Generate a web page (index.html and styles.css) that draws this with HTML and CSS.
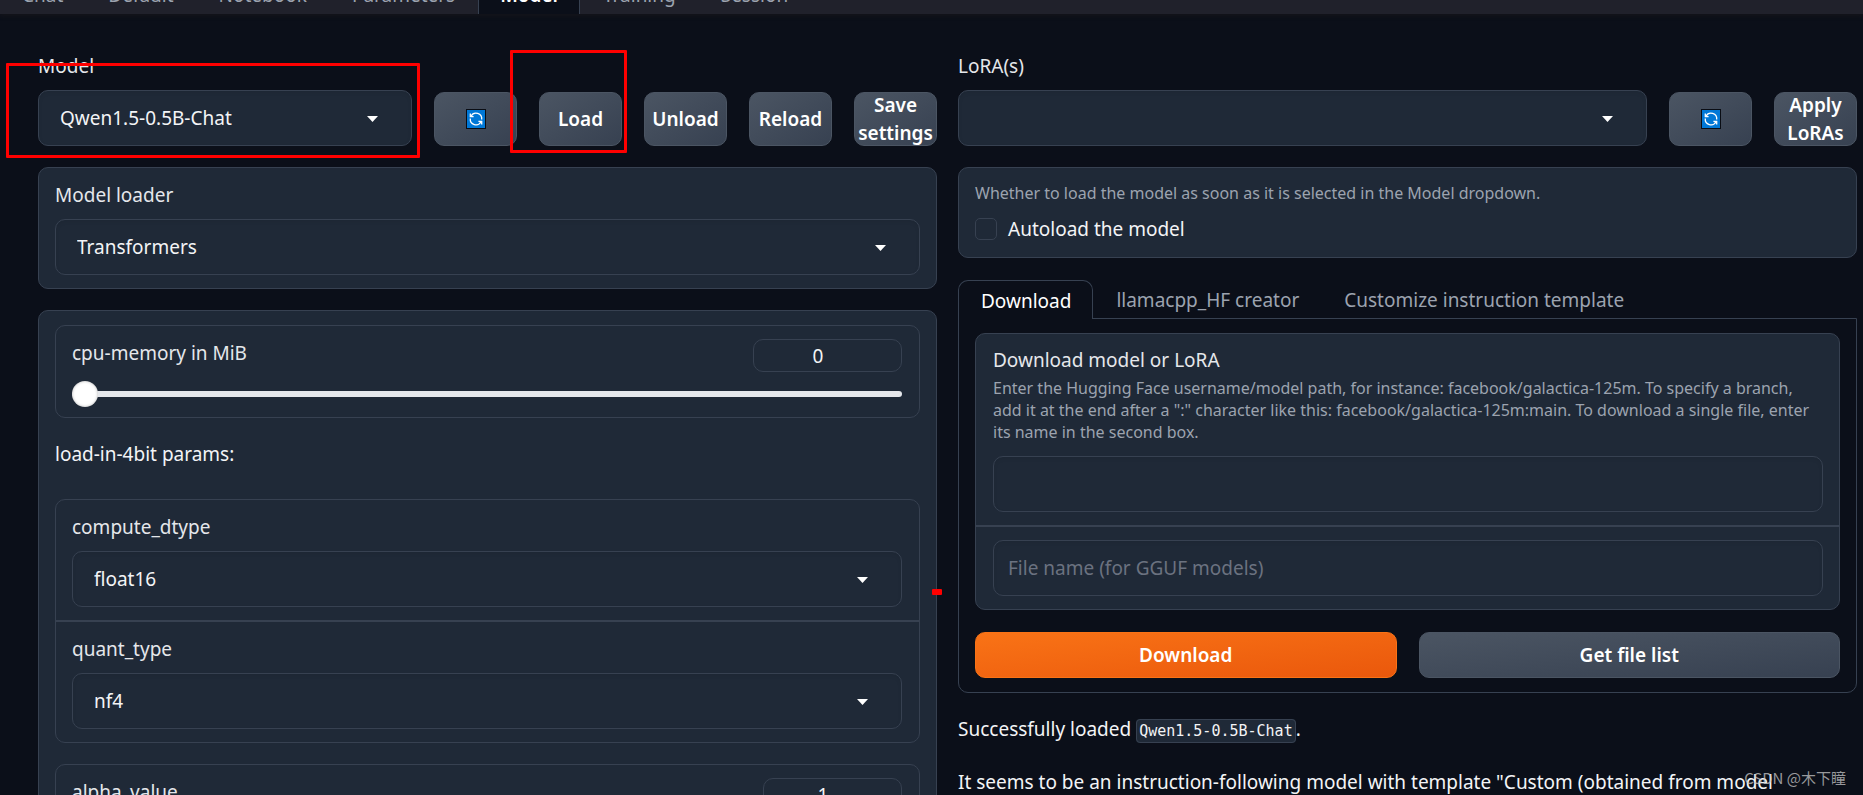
FILE: index.html
```html
<!DOCTYPE html>
<html lang="en">
<head>
<meta charset="utf-8">
<title>Text generation web UI</title>
<link rel="stylesheet" href="styles.css">
</head>
<body>
<svg class="sprite" aria-hidden="true">
  <symbol id="refresh" viewBox="0 0 22 22">
    <rect x="1" y="1" width="20" height="20" fill="#0a0d14"/>
    <rect x="2" y="2" width="18" height="18" fill="#0078d7"/>
    <g fill="none" stroke="#fff" stroke-width="1.3">
      <path d="M6 8.200A5.700 5.700 0 0 1 16.700 11.500"/>
      <path d="M16 13.800A5.700 5.700 0 0 1 5.300 10.500"/>
      <path d="M5.300 5.400V8.700H8.600"/>
      <path d="M16.700 16.600V13.300H13.400"/>
    </g>
  </symbol>
  <symbol id="caret" viewBox="0 0 11 6"><path d="M0 0H11L5.500 6Z" fill="#fff"/></symbol>
</svg>

<nav class="topbar">
  <button class="toptab">Chat</button>
  <button class="toptab">Default</button>
  <button class="toptab">Notebook</button>
  <button class="toptab">Parameters</button>
  <button class="toptab toptab-active">Model</button>
  <button class="toptab">Training</button>
  <button class="toptab">Session</button>
</nav>

<main class="columns">
  <section class="column">
    <div class="toolrow">
      <div class="field grow">
        <label class="label" for="model">Model</label>
        <div class="dropdown"><select id="model"><option>Qwen1.5-0.5B-Chat</option></select><svg class="caret"><use href="#caret"/></svg></div>
      </div>
      <button class="btn tool" aria-label="Refresh models"><svg class="emoji"><use href="#refresh"/></svg></button>
      <button class="btn tool">Load</button>
      <button class="btn tool">Unload</button>
      <button class="btn tool">Reload</button>
      <button class="btn tool">Save settings</button>
    </div>

    <div class="block">
      <div class="cell">
        <label class="label" for="loader">Model loader</label>
        <div class="dropdown"><select id="loader"><option>Transformers</option></select><svg class="caret"><use href="#caret"/></svg></div>
      </div>
    </div>

    <div class="block stack">
      <div class="block">
        <div class="slider">
          <div class="sliderhead">
            <label class="label" for="cpu">cpu-memory in MiB</label>
            <input class="number" type="text" value="0" aria-label="cpu-memory value">
          </div>
          <input class="range" id="cpu" type="range" min="0" max="100" value="0">
        </div>
      </div>
      <p class="note">load-in-4bit params:</p>
      <div class="block">
        <div class="cell">
          <label class="label" for="dtype">compute_dtype</label>
          <div class="dropdown"><select id="dtype"><option>float16</option></select><svg class="caret"><use href="#caret"/></svg></div>
        </div>
        <div class="cell divided">
          <label class="label" for="quant">quant_type</label>
          <div class="dropdown"><select id="quant"><option>nf4</option></select><svg class="caret"><use href="#caret"/></svg></div>
        </div>
      </div>
      <div class="block">
        <div class="slider">
          <div class="sliderhead">
            <label class="label" for="alpha">alpha_value</label>
            <input class="number number-small" type="text" value="1" aria-label="alpha value">
          </div>
          <input class="range" id="alpha" type="range" min="1" max="8" value="1">
        </div>
      </div>
    </div>
  </section>

  <section class="column">
    <div class="toolrow">
      <div class="field grow">
        <label class="label" for="lora">LoRA(s)</label>
        <div class="dropdown"><select id="lora"><option></option></select><svg class="caret"><use href="#caret"/></svg></div>
      </div>
      <button class="btn tool" aria-label="Refresh LoRAs"><svg class="emoji"><use href="#refresh"/></svg></button>
      <button class="btn tool">Apply LoRAs</button>
    </div>

    <div class="block">
      <div class="cell autoload">
        <p class="info">Whether to load the model as soon as it is selected in the Model dropdown.</p>
        <label class="check"><input type="checkbox">Autoload the model</label>
      </div>
    </div>

    <div class="tabs">
      <div class="tablist">
        <button class="tab tab-active">Download</button>
        <button class="tab">llamacpp_HF creator</button>
        <button class="tab">Customize instruction template</button>
      </div>
      <div class="tabpanel">
        <div class="block">
          <div class="cell">
            <label class="label label-tight" for="path">Download model or LoRA</label>
            <p class="info info-above">Enter the Hugging Face username/model path, for instance: facebook/galactica-125m. To specify a branch, add it at the end after a ":" character like this: facebook/galactica-125m:main. To download a single file, enter its name in the second box.</p>
            <input class="text" id="path" type="text">
          </div>
          <div class="cell divided">
            <input class="text" type="text" placeholder="File name (for GGUF models)" aria-label="File name">
          </div>
        </div>
        <div class="actions">
          <button class="btn primary">Download</button>
          <button class="btn">Get file list</button>
        </div>
      </div>
    </div>

    <div class="status">
      <p>Successfully loaded <code>Qwen1.5-0.5B-Chat</code>.</p>
      <p>It seems to be an instruction-following model with template "Custom (obtained from model</p>
    </div>
  </section>
</main>

<div class="mark mark-model"></div>
<div class="mark mark-load"></div>
<div class="mark mark-dash"></div>
<div class="watermark">CSDN @木下瞳</div>
</body>
</html>
```
FILE: styles.css
```css
* { box-sizing: border-box; }

body {
  margin: 0;
  height: 100vh;
  overflow: hidden;
  position: relative;
  background: #0b0f19;
  color: #f3f4f6;
  font: 19px/30px "Noto Sans", "Noto Sans CJK SC", sans-serif;
}

p { margin: 0; }
button, input, select { font: inherit; color: inherit; margin: 0; }
.sprite { display: none; }

/* top navigation, scrolled mostly out of view */
.topbar {
  display: flex;
  align-items: flex-end;
  gap: 1px;
  height: 14px;
  background: #20212b;
  box-shadow: 0 2px 4px #15151a;
}
.toptab {
  flex: none;
  padding: 4px 21px;
  border: 0 solid transparent;
  border-width: 0 1px;
  background: none;
  color: #9ca3af;
}
.toptab-active {
  background: #0b0f19;
  border-color: #374151;
  color: #fff;
  font-weight: 600;
}

.columns {
  display: grid;
  grid-template-columns: 1fr 1fr;
  gap: 21px;
  padding: 37px 6px 0 38px;
}
.column {
  display: flex;
  flex-direction: column;
  gap: 21px;
  min-width: 0;
}
.toolrow { display: flex; align-items: flex-end; gap: 22px; }
.grow { flex: 1; min-width: 0; }

.label {
  display: block;
  margin-bottom: 9px;
  line-height: 30px;
  color: #e5e7eb;
}
.label-tight { margin-bottom: 3px; line-height: 28px; }

.dropdown { display: grid; align-items: center; }
.dropdown select {
  grid-area: 1 / 1;
  width: 100%;
  height: 56px;
  padding: 0 21px;
  appearance: none;
  border: 1px solid #374151;
  border-radius: 10px;
  background: #1f2937;
  box-shadow: inset 0 2px 4px rgba(0, 0, 0, .06);
}
.caret {
  grid-area: 1 / 1;
  justify-self: end;
  width: 11px;
  height: 6px;
  margin-right: 34px;
  margin-top: 2px;
  pointer-events: none;
}

.btn {
  border: 1px solid #4b5563;
  border-radius: 10px;
  background: linear-gradient(to bottom right, #4b5563, #374151);
  color: #fff;
  font-weight: 600;
  height: 46px;
  padding: 0;
}
.tool {
  flex: none;
  display: flex;
  align-items: center;
  justify-content: center;
  width: 83px;
  height: 54px;
  line-height: 28px;
}
.emoji { width: 22px; height: 22px; }
.primary {
  border-color: #f97316;
  background: linear-gradient(to bottom right, #f97316, #ea580c);
}

.block {
  border: 1px solid #374151;
  border-radius: 10px;
  background: #1f2937;
}
.cell { padding: 12px 16px 13px; }
.block .block .cell { padding-right: 17px; }
.tabpanel .cell { padding-left: 17px; }
.divided { border-top: 2px solid #374151; }
.divided .text { margin-top: 1px; }
.stack {
  display: flex;
  flex-direction: column;
  gap: 21px;
  padding: 14px 16px;
}
.note { padding-bottom: 9px; }

.slider { padding: 13px 17px 10px 16px; }
.sliderhead {
  display: flex;
  justify-content: space-between;
  align-items: flex-start;
  margin-bottom: 9px;
}
.sliderhead .label { margin: 0; line-height: 28px; }
.number {
  width: 149px;
  height: 33px;
  padding: 0 29px 0 10px;
  border: 1px solid #374151;
  border-radius: 10px;
  background: #1f2937;
  text-align: center;
}
.number-small { width: 139px; }
.range {
  display: block;
  width: 100%;
  height: 26px;
  appearance: none;
  background: none;
}
.range::-webkit-slider-runnable-track {
  height: 6px;
  border-radius: 3px;
  background: #e5e7eb;
}
.range::-webkit-slider-thumb {
  appearance: none;
  width: 26px;
  height: 26px;
  margin-top: -10px;
  border-radius: 50%;
  background: #fff;
  box-shadow: inset 0 0 3px rgba(0, 0, 0, .3);
}

.info { font-size: 16px; line-height: 22px; color: #9ca3af; }
.info-above { margin-bottom: 13px; }
.autoload { padding-top: 14px; }
.check {
  display: flex;
  align-items: center;
  gap: 11px;
  margin-top: 10px;
}
.check input {
  appearance: none;
  width: 22px;
  height: 22px;
  border: 1px solid #374151;
  border-radius: 5px;
  background: #1f2937;
}
.text {
  display: block;
  width: 100%;
  height: 56px;
  padding: 0 14px;
  border: 1px solid #374151;
  border-radius: 10px;
  background: #1f2937;
  box-shadow: inset 0 2px 4px rgba(0, 0, 0, .06);
}
.text::placeholder { color: #6b7280; opacity: 1; }

.tabs { padding-top: 1px; }
.tablist { display: flex; }
.tab {
  height: 38px;
  padding: 1px 21px 0 22px;
  border: 1px solid transparent;
  border-bottom: 0;
  border-radius: 10px 10px 0 0;
  background: none;
  color: #9ca3af;
}
.tab-active {
  height: 39px;
  margin-bottom: -1px;
  z-index: 1;
  border-color: #374151;
  background: #0b0f19;
  color: #fff;
}
.tabpanel {
  display: flex;
  flex-direction: column;
  gap: 22px;
  padding: 14px 16px;
  border: 1px solid #374151;
  border-radius: 0 0 10px 10px;
}
.actions { display: grid; grid-template-columns: 1fr 1fr; gap: 22px; }

.status { display: flex; flex-direction: column; gap: 23px; }
.status code {
  padding: 2px;
  border: 1px solid #374151;
  border-radius: 4px;
  background: #1f2937;
  font: 15px "DejaVu Sans Mono", monospace;
}

/* annotations over the page */
.mark {
  position: absolute;
  border: 3px solid #f00;
  border-radius: 1px;
  pointer-events: none;
}
.mark-model { left: 6px; top: 63px; width: 414px; height: 95px; }
.mark-load { left: 510px; top: 50px; width: 117px; height: 103px; }
.mark-dash { left: 932px; top: 589px; width: 10px; height: 4px; }
.watermark {
  position: absolute;
  right: 17px;
  bottom: 6px;
  font: 15px/22px "Noto Sans CJK SC", sans-serif;
  color: rgba(200, 200, 200, .75);
}
```
